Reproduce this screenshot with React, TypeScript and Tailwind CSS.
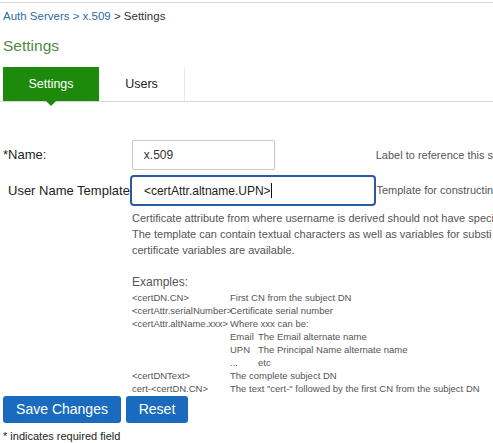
import React from 'react';

const examples: [string, string][] = [
  ['<certDN.CN>', 'First CN from the subject DN'],
  ['<certAttr.serialNumber>', 'Certificate serial number'],
  ['<certAttr.altName.xxx>', 'Where xxx can be:'],
];

const altNames: [string, string][] = [
  ['Email', 'The Email alternate name'],
  ['UPN', 'The Principal Name alternate name'],
  ['...', 'etc'],
];

const App: React.FC = () => {
  return (
    <div className="w-[493px] h-[443px] overflow-hidden bg-white font-['Liberation_Sans',Arial,sans-serif] text-[#333]">
      <div className="pt-[2px]">
        <div className="border-t border-[#d9d9d9]" />
      </div>

      {/* Breadcrumb */}
      <div className="pl-[3px] pt-[6px] text-[11.5px] leading-[14px] whitespace-nowrap">
        <span className="text-[#2c6aa8]">Auth Servers</span>
        <span className="text-[#2c6aa8]"> &gt; </span>
        <span className="text-[#2c6aa8]">x.509</span>
        <span className="text-[#333]"> &gt; Settings</span>
      </div>

      <h1 className="pl-[3px] mt-[13px] text-[15.5px] leading-[20px] text-[#4f8a3f]">Settings</h1>

      {/* Tabs */}
      <div className="mt-[11px] flex border-b border-[#d6d6d6] h-[35px] pl-[3px]">
        <div className="relative w-[96px] bg-[#1e8a0c] text-white text-[12.5px] flex items-center justify-center">
          Settings
          <span className="absolute left-1/2 -translate-x-1/2 top-full w-0 h-0 border-l-[5px] border-r-[5px] border-t-[5px] border-l-transparent border-r-transparent border-t-[#1e8a0c]" />
        </div>
        <div className="w-[86px] border-r border-[#e6e6e6] text-[12.5px] text-[#222] flex items-center justify-center">
          Users
        </div>
      </div>

      {/* Form */}
      <div className="mt-[38px] text-[13px]">
        <div className="flex items-center h-[30px] whitespace-nowrap">
          <label className="w-[132px] pl-[3px] text-[#222]">*Name:</label>
          <div className="w-[143px] h-[30px] border border-[#c8c8c8] rounded-[2px] flex items-center pl-[11px] text-[12px] text-[#333]">
            x.509
          </div>
          <div className="ml-[101px] text-[11px] text-[#555] overflow-hidden">Label to reference this s</div>
        </div>

        <div className="flex items-center h-[31px] mt-[5px] whitespace-nowrap">
          <label className="w-[130px] pl-[8px] text-[13px] text-[#222]">User Name Template</label>
          <div className="w-[247px] h-[31px] border-2 border-[#2a5aa5] rounded-[4px] flex items-center pl-[12px] text-[12px] text-[#222]">
            &lt;certAttr.altname.UPN&gt;<span className="inline-block w-px h-[15px] bg-[#111]" />
          </div>
          <div className="text-[11px] text-[#555] overflow-hidden">Template for constructin</div>
        </div>

        <div className="pl-[132px] pt-[4px] text-[11px] leading-[16px] text-[#555] whitespace-nowrap">
          <div>Certificate attribute from where username is derived should not have speci</div>
          <div>The template can contain textual characters as well as variables for substi</div>
          <div>certificate variables are available.</div>
          <div className="h-[16px]" />
          <div className="text-[12px]">Examples:</div>
          <div className="text-[9.5px] leading-[13px] pt-[1px]">
            {examples.map(([k, v]) => (
              <div key={k} className="flex">
                <span className="w-[98px]">{k}</span>
                <span>{v}</span>
              </div>
            ))}
            {altNames.map(([k, v]) => (
              <div key={k} className="flex pl-[98px]">
                <span className="w-[28px]">{k}</span>
                <span>{v}</span>
              </div>
            ))}
            <div className="flex">
              <span className="w-[98px]">&lt;certDNText&gt;</span>
              <span>The complete subject DN</span>
            </div>
            <div className="flex">
              <span className="w-[98px]">cert-&lt;certDN.CN&gt;</span>
              <span>The text "cert-" followed by the first CN from the subject DN</span>
            </div>
          </div>
        </div>

        <div className="flex gap-[5px] pl-[3px] mt-[1px]">
          <button className="w-[118px] h-[27px] rounded-[3px] bg-[#1a6bbd] text-white text-[14px]">Save Changes</button>
          <button className="w-[62px] h-[27px] rounded-[3px] bg-[#1a6bbd] text-white text-[14px]">Reset</button>
        </div>

        <div className="pl-[3px] mt-[6px] text-[11px] leading-[14px] text-[#222]">* indicates required field</div>
      </div>
    </div>
  );
};

export default App;
